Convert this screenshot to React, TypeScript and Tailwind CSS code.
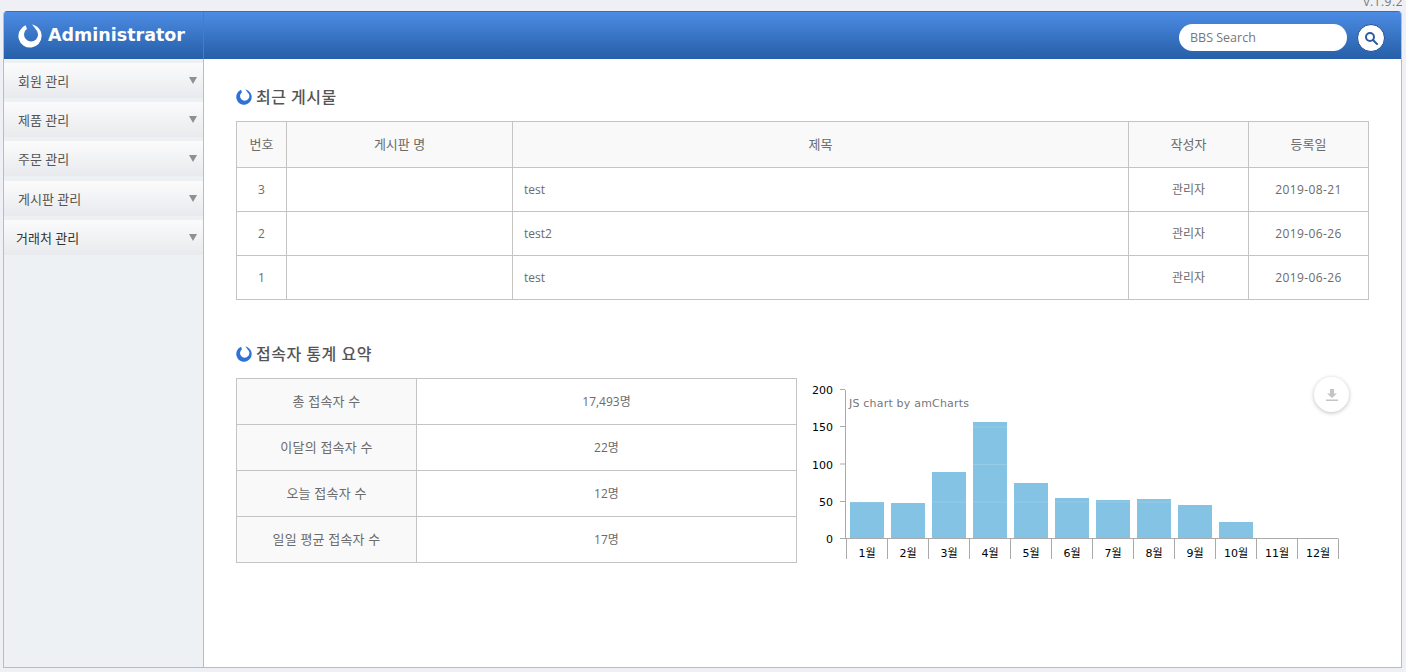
import React from "react";

const font = { fontFamily: '"Open Sans","Noto Sans CJK KR",sans-serif' };

function Ring({ size, color }: { size: number; color: string }) {
  return (
    <svg width={size} height={size} viewBox="0 0 24 24" className="shrink-0">
      <path
        fill={color}
        d="M14 .6 C19.500 1.600 23.600 6.300 23.600 12 A11.600 11.600 0 1 1 7.500 1.300 L9 4.800 A7 7 0 1 0 17.500 5.100 C16.500 3.500 15.500 2 14 .6 Z"
      />
    </svg>
  );
}

const menus = ["회원 관리", "제품 관리", "주문 관리", "게시판 관리", "거래처 관리"];
const menuGaps = ["", "mt-1", "mt-1", "mt-[5px]", "mt-1"];

function Title({ children }: { children: React.ReactNode }) {
  return (
    <div className="flex h-[24px] items-center gap-[4px] text-[16px] font-medium tracking-[0.5px] text-[#555]">
      <Ring size={16} color="#2e72d6" />
      <span>{children}</span>
    </div>
  );
}

const posts = [
  ["3", "test", "2019-08-21"],
  ["2", "test2", "2019-06-26"],
  ["1", "test", "2019-06-26"],
];
const stats = [
  ["총 접속자 수", "17,493명"],
  ["이달의 접속자 수", "22명"],
  ["오늘 접속자 수", "12명"],
  ["일일 평균 접속자 수", "17명"],
];
const bars = [502, 503, 472, 422, 483, 498, 500, 499, 505, 522];
const th = "border border-[#c4c4c4] bg-[#f9f9f9] font-normal";
const td = "border border-[#c4c4c4] font-normal";

function Chart() {
  const ys = [
    [200, 390],
    [150, 427],
    [100, 464.5],
    [50, 502],
    [0, 539],
  ];
  return (
    <svg width={560} height={195} viewBox="800 375 560 195" className="shrink-0" style={{ fontFamily: '"DejaVu Sans","Noto Sans CJK KR",sans-serif' }}>
      {bars.map((top, i) => (
        <rect key={i} x={850 + i * 41} y={top} width={34} height={539 - top} fill="#84c3e3" />
      ))}
      {[427, 464.5, 502].map((y) => (
        <line key={y} x1={846} x2={1338} y1={y} y2={y} stroke="#ffffff" strokeOpacity={0.15} />
      ))}
      <line x1={845.5} x2={845.5} y1={390} y2={539} stroke="#aaaaaa" />
      {ys.map(([v, y]) => (
        <g key={v}>
          <line x1={840} x2={845} y1={y - 0.5} y2={y - 0.5} stroke="#aaaaaa" />
          <text x={833} y={y + 4} textAnchor="end" fontSize={11} fill="#000">{v}</text>
        </g>
      ))}
      <line x1={846} x2={1338.5} y1={538.5} y2={538.5} stroke="#aaaaaa" />
      {Array.from({ length: 13 }).map((_, i) => (
        <line key={i} x1={846.5 + i * 41} x2={846.5 + i * 41} y1={539} y2={559} stroke="#aaaaaa" />
      ))}
      {Array.from({ length: 12 }).map((_, i) => (
        <text key={i} x={867 + i * 41} y={557} textAnchor="middle" fontSize={11} fill="#000">{i + 1}월</text>
      ))}
      <text x={849} y={407} fontSize={11} letterSpacing={0.2} fill="#777">JS chart by amCharts</text>
    </svg>
  );
}

export default function App() {
  return (
    <div className="h-[672px] w-[1406px] overflow-hidden bg-[#eff0f6] px-[3px] text-[12px] text-[#6b6b6b]" style={font}>
      <div className="flex h-[11px] items-start justify-end overflow-hidden text-[12px] leading-[14px] tracking-[0.5px] text-[#777]">
        <span className="-mt-[5px]">v.1.9.2</span>
      </div>
      <div className="flex h-[657px] w-[1399px] flex-col overflow-hidden rounded-t-[4px] border border-t-0 border-[#b9bcc2]">
        <header className="flex h-[48px] shrink-0 border-t border-[#55688a] bg-gradient-to-b from-[#4c8ce4] to-[#265fa8]">
          <div className="flex w-[200px] items-center gap-[6px] border-r border-[#4b7cba] pl-[14px]">
            <Ring size={24} color="#ffffff" />
            <span className="font-bold text-white" style={{ fontFamily: '"DejaVu Sans",sans-serif', fontSize: 17.5 }}>Administrator</span>
          </div>
          <div className="flex flex-1 items-center justify-end pr-[16px] pt-[4px]">
            <input
              readOnly
              placeholder="BBS Search"
              className="h-[27px] w-[168px] rounded-full bg-white px-[11px] text-[12.500px] text-[#666] outline-none placeholder:text-[#777]"
            />
            <div className="ml-[10px] flex h-[28px] w-[28px] items-center justify-center rounded-full border border-[#1f4f94] bg-white">
              <svg width={14} height={14} viewBox="0 0 14 14" fill="none" stroke="#2c5da3" strokeWidth={2}>
                <circle cx={6} cy={6} r={4} />
                <path d="M9 9l4 4" strokeLinecap="round" />
              </svg>
            </div>
          </div>
        </header>
        <div className="flex min-h-0 flex-1">
          <aside className="w-[200px] shrink-0 border-r border-[#b9bcc2] bg-[#eef1f4] pt-[4px]">
            {menus.map((m, i) => (
              <div
                key={m}
                className={`flex h-[35px] items-center justify-between bg-gradient-to-b from-[#fbfbfc] to-[#e8eaed] pr-[6px] text-[13px] ${menuGaps[i]} ${i === 4 ? "pl-[12px] text-[#333]" : "pl-[14px] text-[#555]"}`}
              >
                <span className="mt-[2px]">{m}</span>
                <span className="mb-[1px] h-0 w-0 border-x-[4.500px] border-t-[7px] border-x-transparent border-t-[#909090]" />
              </div>
            ))}
          </aside>
          <main className="flex-1 bg-white pl-[32px] pt-[26px]">
            <Title>최근 게시물</Title>
            <table className="mt-[12px] w-[1133px] table-fixed border-collapse text-center">
              <colgroup>
                <col className="w-[50px]" />
                <col className="w-[226px]" />
                <col className="w-[616px]" />
                <col className="w-[120px]" />
                <col className="w-[120px]" />
              </colgroup>
              <thead>
                <tr className="h-[46px] text-[13px]">
                  <th className={th}>번호</th>
                  <th className={th}>게시판 명</th>
                  <th className={th}>제목</th>
                  <th className={th}>작성자</th>
                  <th className={th}>등록일</th>
                </tr>
              </thead>
              <tbody>
                {posts.map(([n, t, d], i) => (
                  <tr key={i} className="h-[44px]">
                    <td className={td}>{n}</td>
                    <td className={td}></td>
                    <td className={`${td} pl-[11px] text-left`}>{t}</td>
                    <td className={td}>관리자</td>
                    <td className={`${td} tracking-[0.4px]`}>{d}</td>
                  </tr>
                ))}
              </tbody>
            </table>
            <div className="mt-[42px]">
              <Title>접속자 통계 요약</Title>
            </div>
            <div className="mt-[12px] flex items-start gap-[3px]">
              <table className="w-[561px] shrink-0 table-fixed border-collapse text-center">
                <colgroup>
                  <col className="w-[180px]" />
                  <col />
                </colgroup>
                <tbody>
                  {stats.map(([a, b]) => (
                    <tr key={a} className="h-[46px]">
                      <th className={`${th} text-[13px] tracking-[0.2px]`}>{a}</th>
                      <td className={td}>{b}</td>
                    </tr>
                  ))}
                </tbody>
              </table>
              <div className="relative -mt-[3px]">
                <Chart />
                <div className="absolute left-[514px] top-[2px] flex h-[35px] w-[35px] items-center justify-center rounded-full bg-white shadow-[0_1px_4px_rgba(0,0,0,0.25)]">
                  <svg width={14} height={14} viewBox="0 0 14 14" fill="#c4c4c4">
                    <path d="M5 1h4v4.500h3L7 10 2 5.500h3z" />
                    <rect x={1} y={11.500} width={12} height={1.500} />
                  </svg>
                </div>
              </div>
            </div>
          </main>
        </div>
      </div>
    </div>
  );
}
